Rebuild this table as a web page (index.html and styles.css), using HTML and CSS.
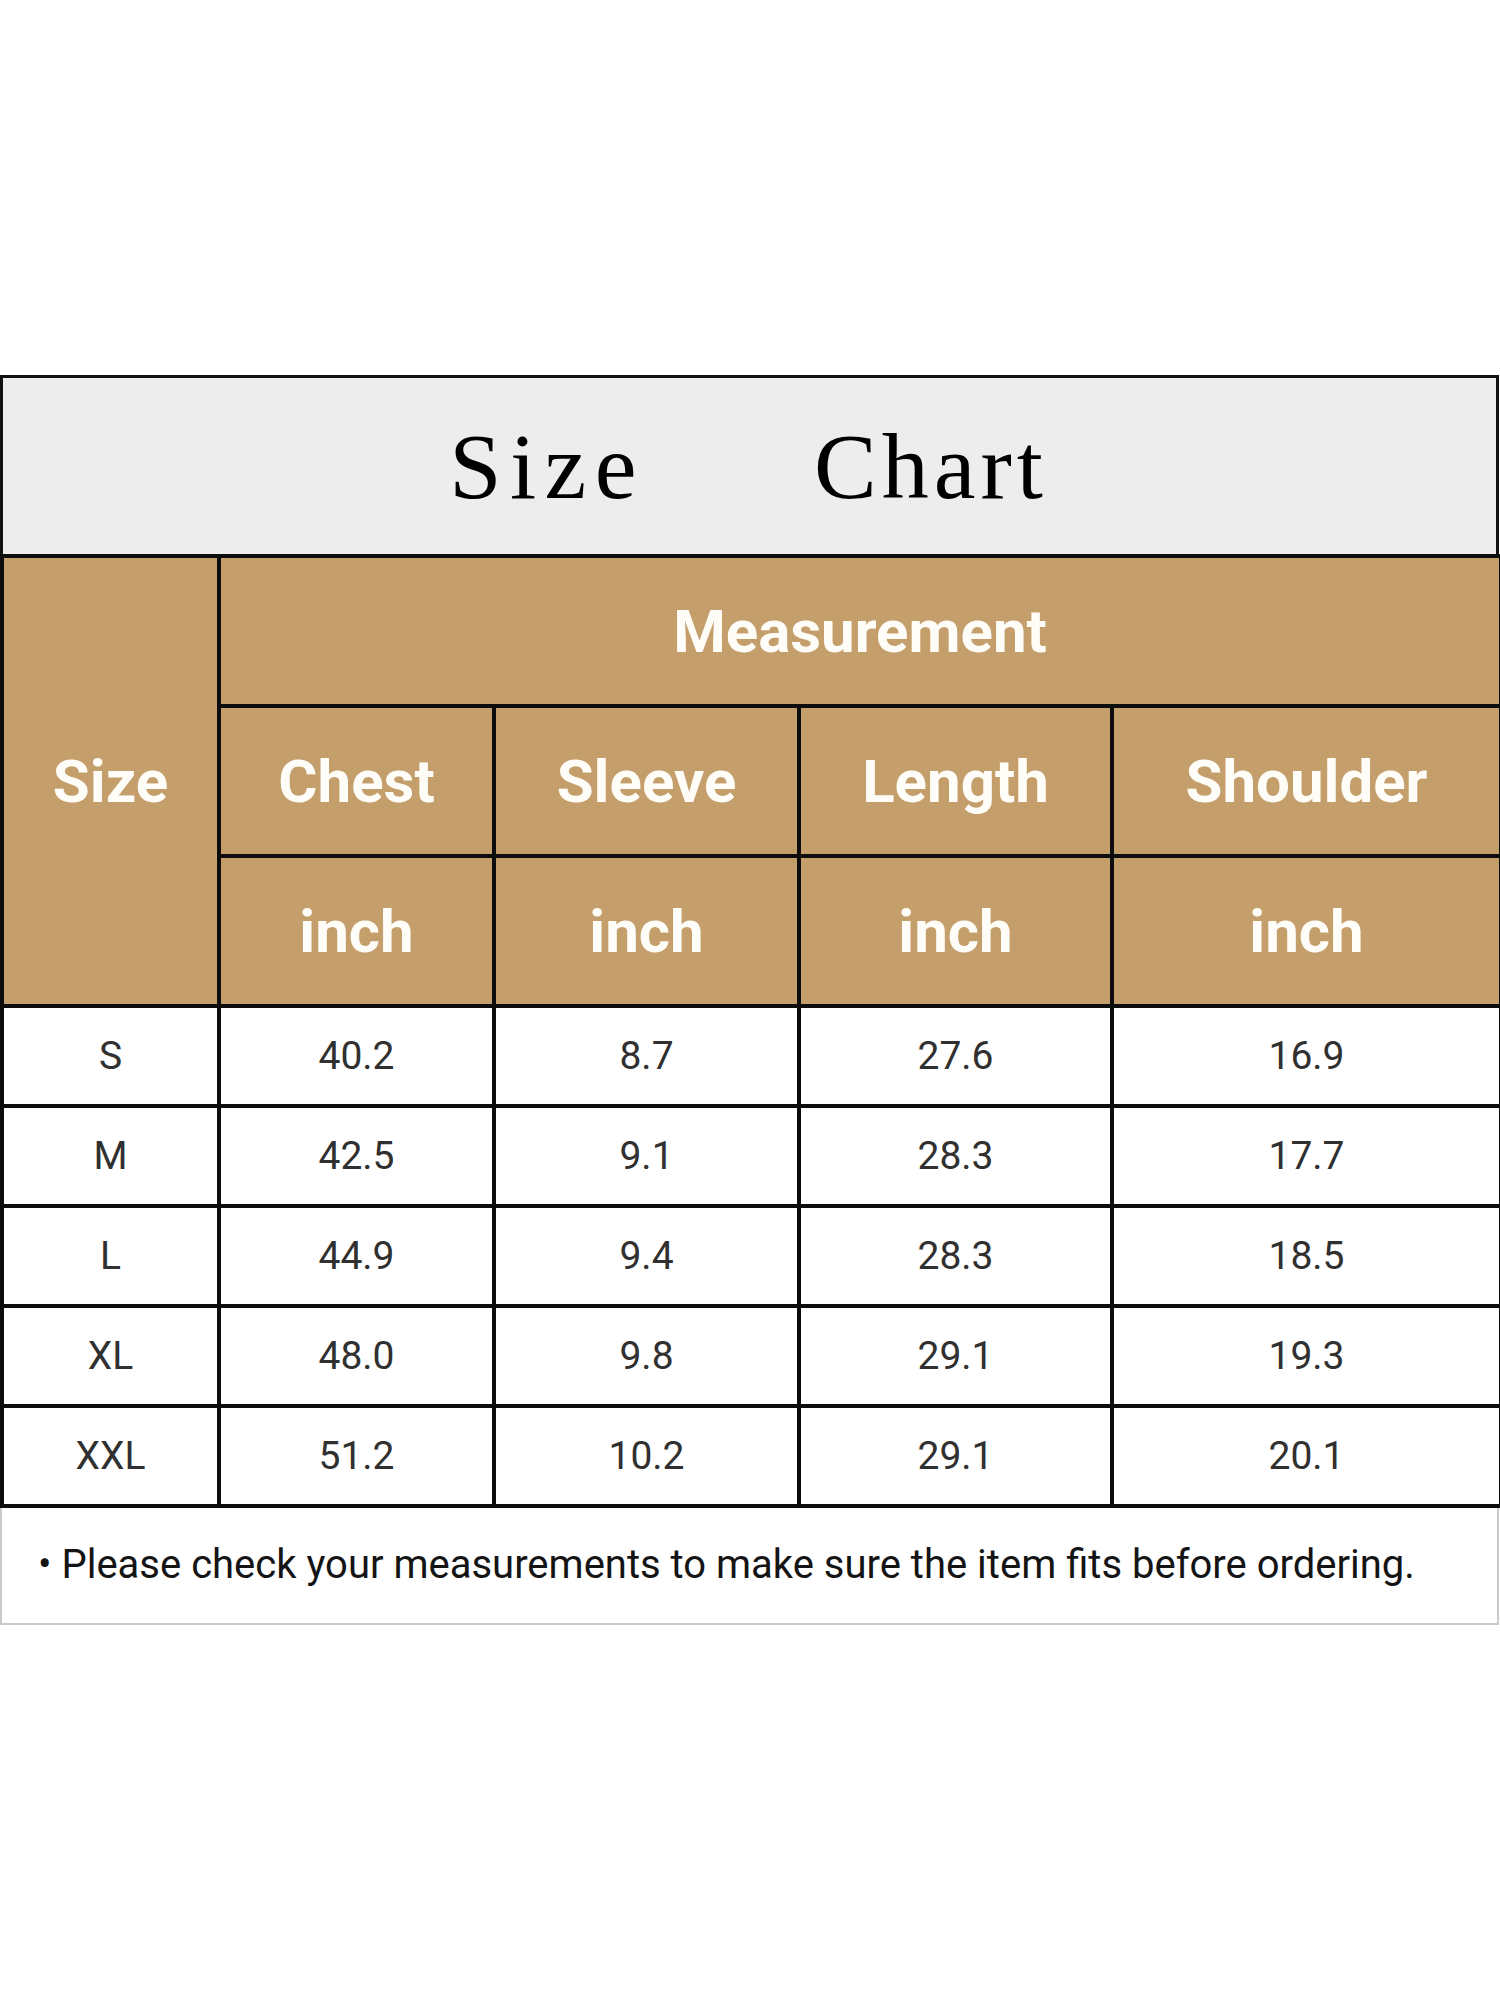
FILE: index.html
```html
<!DOCTYPE html>
<html lang="en">
<head>
<meta charset="utf-8">
<title>Size Chart</title>
<link rel="stylesheet" href="styles.css">
</head>
<body>
<div class="chart">
  <div class="title"><span class="title-word word-size">Size</span><span class="title-word word-chart">Chart</span></div>
  <table class="grid">
    <colgroup>
      <col class="c1"><col class="c2"><col class="c3"><col class="c4"><col class="c5">
    </colgroup>
    <thead>
      <tr class="hrow">
        <th rowspan="3">Size</th>
        <th colspan="4">Measurement</th>
      </tr>
      <tr class="hrow">
        <th>Chest</th><th>Sleeve</th><th>Length</th><th>Shoulder</th>
      </tr>
      <tr class="hrow">
        <th>inch</th><th>inch</th><th>inch</th><th>inch</th>
      </tr>
    </thead>
    <tbody>
      <tr class="drow"><td>S</td><td>40.2</td><td>8.7</td><td>27.6</td><td>16.9</td></tr>
      <tr class="drow"><td>M</td><td>42.5</td><td>9.1</td><td>28.3</td><td>17.7</td></tr>
      <tr class="drow"><td>L</td><td>44.9</td><td>9.4</td><td>28.3</td><td>18.5</td></tr>
      <tr class="drow"><td>XL</td><td>48.0</td><td>9.8</td><td>29.1</td><td>19.3</td></tr>
      <tr class="drow"><td>XXL</td><td>51.2</td><td>10.2</td><td>29.1</td><td>20.1</td></tr>
    </tbody>
  </table>
  <div class="note">• Please check your measurements to make sure the item fits before ordering.</div>
</div>
</body>
</html>
```
FILE: styles.css
```css
html, body {
  margin: 0;
  padding: 0;
  background: #ffffff;
}

.chart {
  margin-top: 375px;
  width: 1499px;
}

.title {
  box-sizing: border-box;
  height: 179px;
  background: #ededed;
  border: 3px solid #111111;
  border-bottom: none;
  display: flex;
  justify-content: center;
  align-items: center;
  gap: 169px;
  font-family: "Liberation Serif", "Times New Roman", serif;
  font-size: 94px;
  color: #000000;
  padding-right: 2px;
}

.title-word {
  line-height: 1;
}

.word-size {
  letter-spacing: 8.5px;
}

.word-chart {
  letter-spacing: 5px;
}

.grid {
  width: 1499px;
  border-collapse: collapse;
  table-layout: fixed;
  font-family: Roboto, "Liberation Sans", sans-serif;
}

.c1 { width: 217px; }
.c2 { width: 275px; }
.c3 { width: 305px; }
.c4 { width: 313px; }
.c5 { width: 389px; }

.grid th,
.grid td {
  border: 4px solid #0d0d0d;
  padding: 0;
  text-align: center;
  vertical-align: middle;
}

.grid th {
  background: #c49e6b;
  color: #fffdf8;
  font-weight: 700;
  font-size: 60px;
}

.hrow {
  height: 150px;
}

.drow {
  height: 100px;
}

.grid td {
  color: #303030;
  font-weight: 400;
  font-size: 39px;
  background: #ffffff;
}

.note {
  box-sizing: border-box;
  height: 117px;
  border: 2px solid #c9c9c9;
  border-top: none;
  display: flex;
  align-items: center;
  padding-left: 36px;
  padding-bottom: 2px;
  font-family: Roboto, "Liberation Sans", sans-serif;
  font-size: 40px;
  color: #141414;
}
```
